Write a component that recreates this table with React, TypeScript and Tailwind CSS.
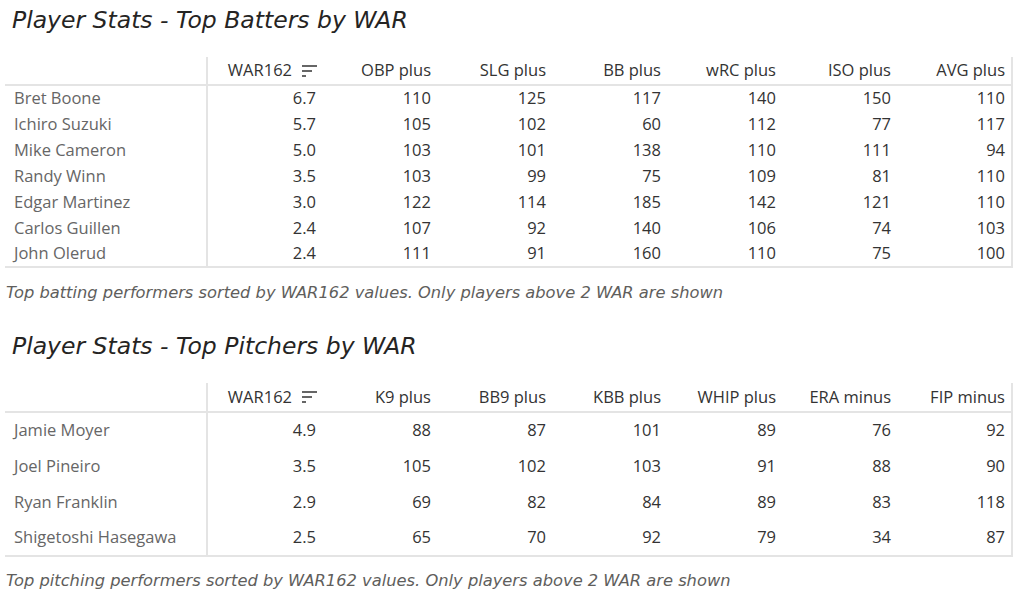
const batters = {
  cols: ['OBP plus', 'SLG plus', 'BB plus', 'wRC plus', 'ISO plus', 'AVG plus'],
  rows: [
    ['Bret Boone', '6.7', 110, 125, 117, 140, 150, 110],
    ['Ichiro Suzuki', '5.7', 105, 102, 60, 112, 77, 117],
    ['Mike Cameron', '5.0', 103, 101, 138, 110, 111, 94],
    ['Randy Winn', '3.5', 103, 99, 75, 109, 81, 110],
    ['Edgar Martinez', '3.0', 122, 114, 185, 142, 121, 110],
    ['Carlos Guillen', '2.4', 107, 92, 140, 106, 74, 103],
    ['John Olerud', '2.4', 111, 91, 160, 110, 75, 100],
  ],
};

const pitchers = {
  cols: ['K9 plus', 'BB9 plus', 'KBB plus', 'WHIP plus', 'ERA minus', 'FIP minus'],
  rows: [
    ['Jamie Moyer', '4.9', 88, 87, 101, 89, 76, 92],
    ['Joel Pineiro', '3.5', 105, 102, 103, 91, 88, 90],
    ['Ryan Franklin', '2.9', 69, 82, 84, 89, 83, 118],
    ['Shigetoshi Hasegawa', '2.5', 65, 70, 92, 79, 34, 87],
  ],
};

function SortIcon() {
  return (
    <svg width="16" height="14" viewBox="0 0 16 14" className="ml-[10px] inline-block">
      <rect x="0" y="1" width="15" height="2" fill="#666" />
      <rect x="0" y="6" width="10" height="2" fill="#666" />
      <rect x="0" y="11" width="4" height="2" fill="#666" />
    </svg>
  );
}

function StatsTable({ data, rowH, headH }: { data: { cols: string[]; rows: (string | number)[][] }; rowH: string; headH: string }) {
  return (
    <table className="ml-[5px] w-[1007px] table-fixed border-collapse text-[16.5px] font-['Open_Sans',sans-serif]">
      <colgroup>
        <col className="w-[202px]" />
        {Array.from({ length: 7 }).map((_, i) => (
          <col key={i} className="w-[115px]" />
        ))}
      </colgroup>
      <thead>
        <tr className={`${headH} border-b-2 border-[#e4e4e4]`}>
          <th className="border-r-2 border-[#e4e4e4]"></th>
          <th className="pr-[4px] text-right font-normal text-[#333]">
            <span className="inline-flex items-center">
              WAR162
              <SortIcon />
            </span>
          </th>
          {data.cols.map((c, i) => (
            <th key={c} className={`pr-[6px] text-right font-normal text-[#333] ${i === data.cols.length - 1 ? 'border-r-2 border-[#e4e4e4]' : ''}`}>
              {c}
            </th>
          ))}
        </tr>
      </thead>
      <tbody className="border-b-2 border-[#e4e4e4]">
        {data.rows.map((r) => (
          <tr key={r[0] as string} className={rowH}>
            <td className="border-r-2 border-[#e4e4e4] pl-[9px] text-[#666]">{r[0]}</td>
            <td className="pr-[6px] text-right text-[#333]">{r[1]}</td>
            {r.slice(2).map((v, i) => (
              <td key={i} className={`pr-[6px] text-right text-[#333] ${i === 5 ? 'border-r-2 border-[#e4e4e4]' : ''}`}>
                {v}
              </td>
            ))}
          </tr>
        ))}
      </tbody>
    </table>
  );
}

export default function App() {
  return (
    <div className="h-[597px] w-[1024px] overflow-hidden bg-white">
      {/* Batters */}
      <h1 className="mt-[4px] pl-[12px] text-[23.5px] leading-[32px] text-[#252423] font-['DejaVu_Sans',sans-serif] italic">
        Player Stats - Top Batters by WAR
      </h1>
      <div className="mt-[21px]">
        <StatsTable data={batters} rowH="h-[26px]" headH="h-[28px]" />
      </div>
      <p className="mt-[14px] pl-[6px] text-[16.3px] leading-[22px] text-[#605e5c] font-['DejaVu_Sans',sans-serif] italic">
        Top batting performers sorted by WAR162 values. Only players above 2 WAR are shown
      </p>

      {/* Pitchers */}
      <h1 className="mt-[26px] pl-[12px] text-[23.5px] leading-[32px] text-[#252423] font-['DejaVu_Sans',sans-serif] italic">
        Player Stats - Top Pitchers by WAR
      </h1>
      <div className="mt-[21px]">
        <StatsTable data={pitchers} rowH="h-[36px]" headH="h-[29px]" />
      </div>
      <p className="mt-[13px] pl-[6px] text-[16.3px] leading-[22px] text-[#605e5c] font-['DejaVu_Sans',sans-serif] italic">
        Top pitching performers sorted by WAR162 values. Only players above 2 WAR are shown
      </p>
    </div>
  );
}
